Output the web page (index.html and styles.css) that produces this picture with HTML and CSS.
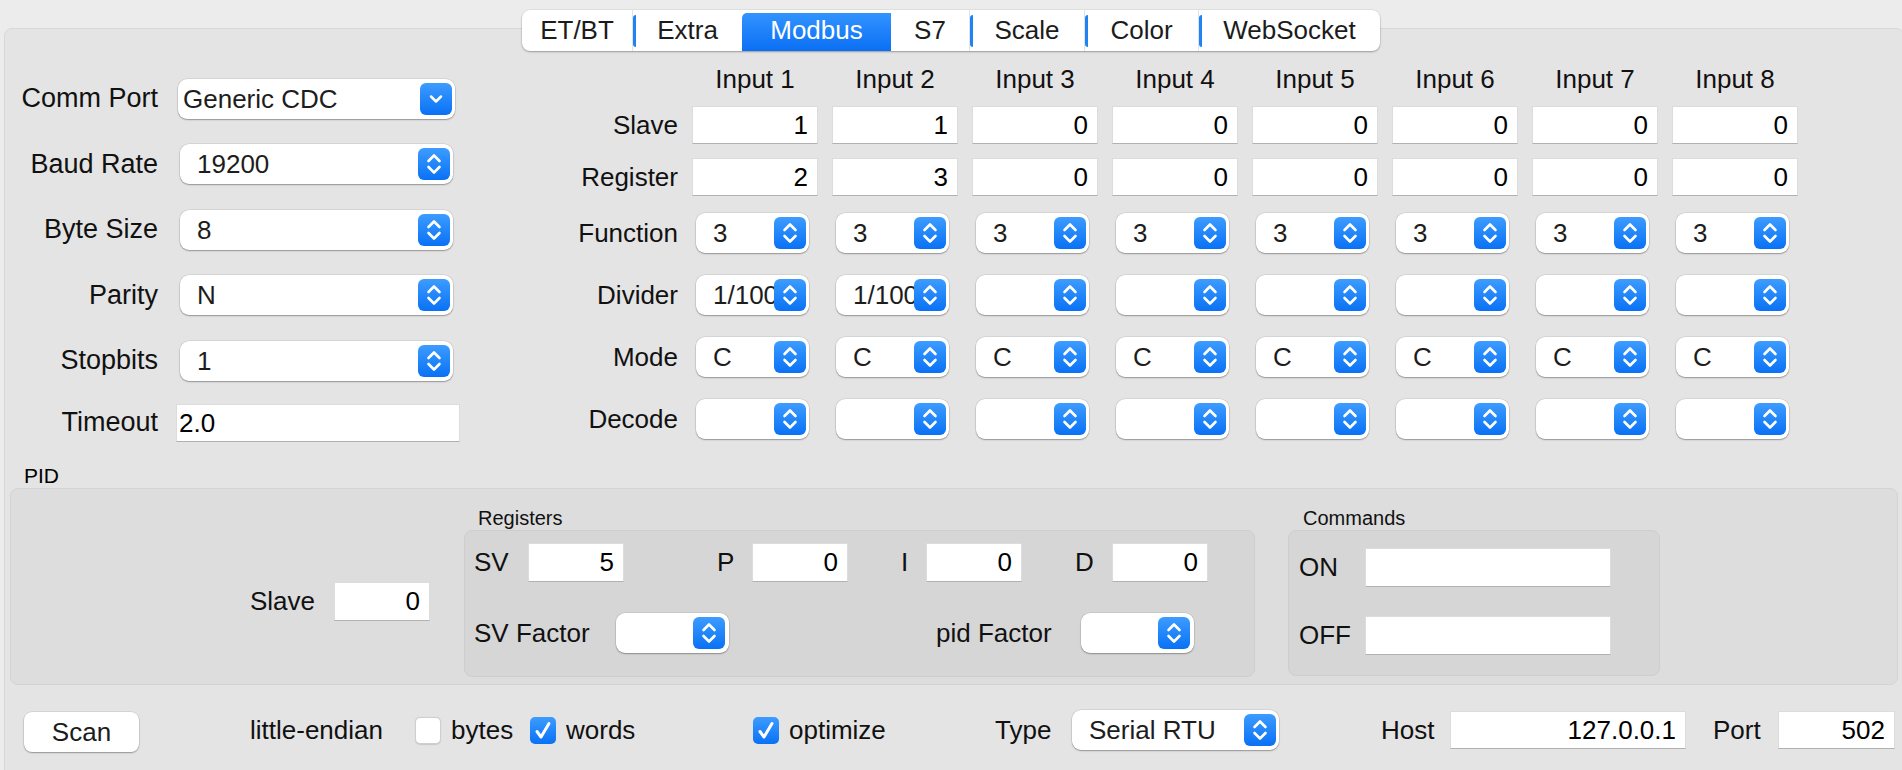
FILE: index.html
```html
<!DOCTYPE html>
<html>
<head>
<meta charset="utf-8">
<title>Modbus</title>
<link rel="stylesheet" href="styles.css">
</head>
<body>
<svg class="defs" aria-hidden="true">
  <defs>
    <symbol id="ud" viewBox="0 0 32 32"><path d="M10.5 13 L16 7.5 L21.5 13 M10.5 19 L16 24.5 L21.5 19" fill="none" stroke="#fff" stroke-width="2.6" stroke-linecap="round" stroke-linejoin="round"/></symbol>
    <symbol id="dn" viewBox="0 0 32 32"><path d="M11 13.5 L16 18.5 L21 13.5" fill="none" stroke="#fff" stroke-width="2.5" stroke-linecap="round" stroke-linejoin="round"/></symbol>
    <symbol id="ck" viewBox="0 0 26 27"><path d="M7 14.5 L11 20 L19 6.5" fill="none" stroke="#fff" stroke-width="3" stroke-linecap="round" stroke-linejoin="round"/></symbol>
  </defs>
</svg>

<div class="tabs">
  <div class="tab t1">ET/BT</div>
  <div class="tab t2 sl">Extra</div>
  <div class="tab t3 active">Modbus</div>
  <div class="tab t4">S7</div>
  <div class="tab t5 sl">Scale</div>
  <div class="tab t6 sl">Color</div>
  <div class="tab t7 sl">WebSocket</div>
</div>

<div class="panel">
  <div class="top">
    <div class="serial">
      <div class="sl-label">Comm Port</div>
      <div class="combo edit"><span class="val">Generic CDC</span><span class="btn"><svg><use href="#dn"/></svg></span></div>
      <div class="sl-label">Baud Rate</div>
      <div class="combo pop"><span class="val">19200</span><span class="btn"><svg><use href="#ud"/></svg></span></div>
      <div class="sl-label">Byte Size</div>
      <div class="combo pop"><span class="val">8</span><span class="btn"><svg><use href="#ud"/></svg></span></div>
      <div class="sl-label">Parity</div>
      <div class="combo pop"><span class="val">N</span><span class="btn"><svg><use href="#ud"/></svg></span></div>
      <div class="sl-label">Stopbits</div>
      <div class="combo pop"><span class="val">1</span><span class="btn"><svg><use href="#ud"/></svg></span></div>
      <div class="sl-label">Timeout</div>
      <div class="field timeout">2.0</div>
    </div>

    <div class="inputs">
      <div></div>
      <div class="hd">Input 1</div><div class="hd">Input 2</div><div class="hd">Input 3</div><div class="hd">Input 4</div>
      <div class="hd">Input 5</div><div class="hd">Input 6</div><div class="hd">Input 7</div><div class="hd">Input 8</div>

      <div class="rl">Slave</div>
      <div class="field">1</div><div class="field">1</div><div class="field">0</div><div class="field">0</div>
      <div class="field">0</div><div class="field">0</div><div class="field">0</div><div class="field">0</div>

      <div class="rl">Register</div>
      <div class="field">2</div><div class="field">3</div><div class="field">0</div><div class="field">0</div>
      <div class="field">0</div><div class="field">0</div><div class="field">0</div><div class="field">0</div>

      <div class="rl rc">Function</div>
      <div class="combo sm"><span class="val">3</span><span class="btn"><svg><use href="#ud"/></svg></span></div>
      <div class="combo sm"><span class="val">3</span><span class="btn"><svg><use href="#ud"/></svg></span></div>
      <div class="combo sm"><span class="val">3</span><span class="btn"><svg><use href="#ud"/></svg></span></div>
      <div class="combo sm"><span class="val">3</span><span class="btn"><svg><use href="#ud"/></svg></span></div>
      <div class="combo sm"><span class="val">3</span><span class="btn"><svg><use href="#ud"/></svg></span></div>
      <div class="combo sm"><span class="val">3</span><span class="btn"><svg><use href="#ud"/></svg></span></div>
      <div class="combo sm"><span class="val">3</span><span class="btn"><svg><use href="#ud"/></svg></span></div>
      <div class="combo sm"><span class="val">3</span><span class="btn"><svg><use href="#ud"/></svg></span></div>

      <div class="rl rc">Divider</div>
      <div class="combo sm"><span class="val">1/100</span><span class="btn"><svg><use href="#ud"/></svg></span></div>
      <div class="combo sm"><span class="val">1/100</span><span class="btn"><svg><use href="#ud"/></svg></span></div>
      <div class="combo sm"><span class="val"></span><span class="btn"><svg><use href="#ud"/></svg></span></div>
      <div class="combo sm"><span class="val"></span><span class="btn"><svg><use href="#ud"/></svg></span></div>
      <div class="combo sm"><span class="val"></span><span class="btn"><svg><use href="#ud"/></svg></span></div>
      <div class="combo sm"><span class="val"></span><span class="btn"><svg><use href="#ud"/></svg></span></div>
      <div class="combo sm"><span class="val"></span><span class="btn"><svg><use href="#ud"/></svg></span></div>
      <div class="combo sm"><span class="val"></span><span class="btn"><svg><use href="#ud"/></svg></span></div>

      <div class="rl rc">Mode</div>
      <div class="combo sm"><span class="val">C</span><span class="btn"><svg><use href="#ud"/></svg></span></div>
      <div class="combo sm"><span class="val">C</span><span class="btn"><svg><use href="#ud"/></svg></span></div>
      <div class="combo sm"><span class="val">C</span><span class="btn"><svg><use href="#ud"/></svg></span></div>
      <div class="combo sm"><span class="val">C</span><span class="btn"><svg><use href="#ud"/></svg></span></div>
      <div class="combo sm"><span class="val">C</span><span class="btn"><svg><use href="#ud"/></svg></span></div>
      <div class="combo sm"><span class="val">C</span><span class="btn"><svg><use href="#ud"/></svg></span></div>
      <div class="combo sm"><span class="val">C</span><span class="btn"><svg><use href="#ud"/></svg></span></div>
      <div class="combo sm"><span class="val">C</span><span class="btn"><svg><use href="#ud"/></svg></span></div>

      <div class="rl rc">Decode</div>
      <div class="combo sm"><span class="val"></span><span class="btn"><svg><use href="#ud"/></svg></span></div>
      <div class="combo sm"><span class="val"></span><span class="btn"><svg><use href="#ud"/></svg></span></div>
      <div class="combo sm"><span class="val"></span><span class="btn"><svg><use href="#ud"/></svg></span></div>
      <div class="combo sm"><span class="val"></span><span class="btn"><svg><use href="#ud"/></svg></span></div>
      <div class="combo sm"><span class="val"></span><span class="btn"><svg><use href="#ud"/></svg></span></div>
      <div class="combo sm"><span class="val"></span><span class="btn"><svg><use href="#ud"/></svg></span></div>
      <div class="combo sm"><span class="val"></span><span class="btn"><svg><use href="#ud"/></svg></span></div>
      <div class="combo sm"><span class="val"></span><span class="btn"><svg><use href="#ud"/></svg></span></div>
    </div>
  </div>

  <div class="pid-title">PID</div>
  <div class="pid">
    <div class="pid-slave">
      <span class="lbl w84">Slave</span>
      <div class="field w96">0</div>
    </div>

    <div class="grp">
      <div class="grp-title">Registers</div>
      <div class="grp-box regs">
        <div class="row r1">
          <span class="lbl w54">SV</span><div class="field w96">5</div>
          <span class="lbl w35 g93">P</span><div class="field w96">0</div>
          <span class="lbl w25 g53">I</span><div class="field w96">0</div>
          <span class="lbl w37 g53">D</span><div class="field w96">0</div>
        </div>
        <div class="row r2">
          <span class="lbl w142">SV Factor</span>
          <div class="combo fac"><span class="val"></span><span class="btn"><svg><use href="#ud"/></svg></span></div>
          <span class="lbl w145 g207">pid Factor</span>
          <div class="combo fac"><span class="val"></span><span class="btn"><svg><use href="#ud"/></svg></span></div>
        </div>
      </div>
    </div>

    <div class="grp cmds-grp">
      <div class="grp-title cmd-title">Commands</div>
      <div class="grp-box cmds">
        <div class="row c1"><span class="lbl w66">ON</span><div class="field w246"></div></div>
        <div class="row c2"><span class="lbl w66">OFF</span><div class="field w246"></div></div>
      </div>
    </div>
  </div>

  <div class="bottom">
    <div class="scan">Scan</div>
    <span class="txt le">little-endian</span>
    <span class="chk off m24"></span>
    <span class="txt bytes">bytes</span>
    <span class="chk on m14"><svg><use href="#ck"/></svg></span>
    <span class="txt words">words</span>
    <span class="chk on m116"><svg><use href="#ck"/></svg></span>
    <span class="txt opt">optimize</span>
    <span class="txt type">Type</span>
    <div class="combo typ"><span class="val">Serial RTU</span><span class="btn"><svg><use href="#ud"/></svg></span></div>
    <span class="txt host">Host</span>
    <div class="field hostf">127.0.0.1</div>
    <span class="txt port">Port</span>
    <div class="field portf">502</div>
  </div>
</div>
</body>
</html>
```

FILE: styles.css
```css
* { box-sizing: border-box; }
html, body { margin: 0; padding: 0; }
body {
  width: 1902px;
  height: 770px;
  overflow: hidden;
  background: #ececec;
  font-family: "Liberation Sans", Arial, sans-serif;
  font-size: 26px;
  color: #000;
}
.defs { position: absolute; width: 0; height: 0; overflow: hidden; }

/* ---------- tabs ---------- */
.tabs {
  position: relative;
  z-index: 2;
  display: flex;
  width: max-content;
  height: 41px;
  margin: 10px auto 0;
  background: #fff;
  border-radius: 8px;
  overflow: hidden;
  box-shadow: 0 0 0 0.5px rgba(0,0,0,0.08), 0 1px 2px rgba(0,0,0,0.3);
}
.tab {
  position: relative;
  display: flex;
  align-items: center;
  justify-content: center;
  color: #1c1c1c;
  border-left: 1px solid #e3e3e3;
}
.tab.t1 { width: 110px; border-left: 0; }
.tab.t2 { width: 110px; }
.tab.t3 { width: 149px; }
.tab.t4 { width: 78px; border-left: 0; }
.tab.t5 { width: 115px; }
.tab.t6 { width: 114px; }
.tab.t7 { width: 182px; }
.tab.sl::before {
  content: "";
  position: absolute;
  left: 0;
  top: 5px;
  bottom: 4px;
  width: 3px;
  background: #1f82f7;
  border-radius: 3px 0 0 3px;
}
.tab.active {
  margin-top: 3px;
  padding-bottom: 3px;
  color: #fff;
  border-left: 0;
  border-top-left-radius: 5px;
  background: linear-gradient(#3393ff, #0a6ff4);
}

/* ---------- panel ---------- */
.panel {
  position: relative;
  z-index: 1;
  margin: -23px 0 0 4px;
  width: 1900px;
  height: 760px;
  background: #e4e4e4;
  border: 1px solid #d7d7d7;
  border-radius: 8px;
}
.top {
  display: flex;
  align-items: flex-start;
  height: 435px;
}

/* serial form */
.serial {
  margin: 37px 0 0 5px;
  display: grid;
  grid-template-columns: 148px 282px;
  column-gap: 20px;
  grid-template-rows: repeat(5, 65.5px) 58px;
  align-items: center;
}
.sl-label {
  text-align: right;
  font-size: 27px;
  color: #111;
}

/* combos */
.combo {
  display: flex;
  align-items: center;
  height: 40px;
  padding: 4px 3px 4px 17px;
  background: #fff;
  border-radius: 9px;
  box-shadow: 0 0 0 0.5px rgba(0,0,0,0.12), 0 1px 1.5px rgba(0,0,0,0.3);
  color: #1d1d1d;
}
.combo .val {
  flex: 1;
  overflow: hidden;
  white-space: nowrap;
  line-height: 32px;
}
.combo .btn {
  flex: none;
  width: 32px;
  height: 32px;
  border-radius: 6px;
  background: linear-gradient(#3d9cff, #0971f5);
}
.combo .btn svg { display: block; width: 32px; height: 32px; }
.combo.edit { width: 277px; padding-left: 5px; }
.combo.pop { width: 273px; margin-left: 2px; }
.combo.sm { width: 113px; margin-left: 4px; }
.combo.fac { width: 113px; padding-right: 4px; }
.combo.typ { width: 207px; margin-left: 18px; padding-left: 17px; }

/* line edits */
.field {
  height: 38px;
  background: #fff;
  border: 1px solid #dcdcdc;
  border-bottom-color: #b1b1b1;
  text-align: right;
  padding-right: 9px;
  line-height: 36px;
  white-space: nowrap;
  color: #000;
}
.field.timeout {
  width: 284px;
  margin-left: -2px;
  text-align: left;
  padding-left: 2px;
}

/* inputs grid */
.inputs {
  margin: 31px 0 0 100px;
  display: grid;
  grid-template-columns: 118px repeat(8, 126px);
  column-gap: 14px;
  grid-template-rows: 46px 52px 55px 62px 62px 62px 40px;
  align-items: start;
}
.hd { text-align: center; line-height: 38px; color: #111; }
.rl { text-align: right; line-height: 38px; color: #111; }
.rl.rc { line-height: 40px; }

/* ---------- PID ---------- */
.pid-title {
  height: 24px;
  line-height: 24px;
  font-size: 21px;
  padding-left: 19px;
}
.pid {
  margin: 0 5px;
  height: 197px;
  background: #dddddd;
  border: 1px solid #d3d3d3;
  border-radius: 8px;
  display: flex;
  align-items: flex-start;
}
.lbl { flex: none; white-space: nowrap; color: #111; }
.w25 { width: 25px; } .w35 { width: 35px; } .w37 { width: 37px; }
.w54 { width: 54px; } .w66 { width: 66px; } .w84 { width: 84px; }
.w142 { width: 142px; } .w145 { width: 145px; }
.field.w96 { width: 96px; height: 39px; line-height: 37px; }
.field.w246 { width: 246px; height: 39px; }
.g53 { margin-left: 53px; } .g93 { margin-left: 93px; } .g207 { margin-left: 207px; }

.pid-slave {
  display: flex;
  align-items: center;
  margin: 93px 0 0 239px;
}
.grp { margin: 18px 0 0 34px; }
.grp.cmds-grp { margin-left: 33px; }
.grp-title {
  height: 23px;
  line-height: 23px;
  font-size: 20px;
  padding-left: 14px;
  color: #111;
}
.grp-title.cmd-title { padding-left: 15px; }
.grp-box {
  background: #d6d6d6;
  border: 1px solid #cecece;
  border-radius: 8px;
}
.regs { width: 791px; height: 147px; padding: 12px 0 0 9px; }
.cmds { width: 372px; height: 146px; padding: 17px 0 0 10px; }
.row { display: flex; align-items: center; }
.row.r1 { height: 39px; }
.row.r2 { height: 40px; margin-top: 31px; }
.row.c1 { height: 39px; }
.row.c2 { height: 39px; margin-top: 29px; }

/* ---------- bottom ---------- */
.bottom {
  display: flex;
  align-items: center;
  height: 44px;
  margin-top: 23px;
}
.scan {
  flex: none;
  width: 115px;
  height: 40px;
  margin-left: 19px;
  margin-top: 3px;
  line-height: 40px;
  text-align: center;
  background: #fff;
  border-radius: 8px;
  box-shadow: 0 0 0 0.5px rgba(0,0,0,0.12), 0 1px 1.5px rgba(0,0,0,0.3);
  color: #1c1c1c;
}
.txt { flex: none; white-space: nowrap; color: #111; }
.le { width: 141px; margin-left: 111px; }
.bytes { width: 65px; margin-left: 10px; }
.words { width: 71px; margin-left: 10px; }
.opt { width: 103px; margin-left: 10px; }
.type { width: 59px; margin-left: 103px; }
.host { width: 55px; margin-left: 102px; }
.port { width: 52px; margin-left: 27px; }
.field.hostf { width: 236px; margin-left: 14px; }
.field.portf { width: 117px; margin-left: 13px; }

.chk {
  flex: none;
  display: block;
  width: 26px;
  height: 27px;
  border-radius: 5px;
}
.chk svg { display: block; width: 26px; height: 27px; }
.chk.off {
  background: #fff;
  border: 1px solid #cfcfcf;
  box-shadow: 0 0.5px 1px rgba(0,0,0,0.12);
}
.chk.on { background: linear-gradient(#3d9cff, #0971f5); }
.m14 { margin-left: 14px; }
.m24 { margin-left: 24px; }
.m116 { margin-left: 116px; }
```
